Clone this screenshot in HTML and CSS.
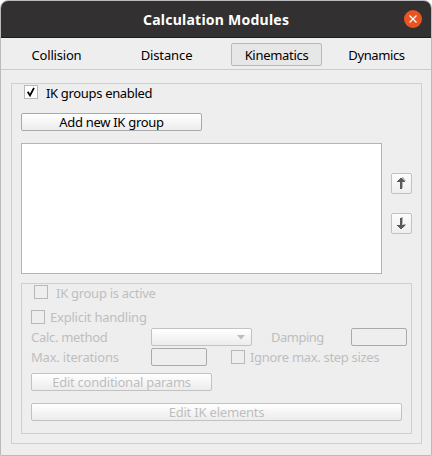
FILE: index.html
```html
<!DOCTYPE html>
<html lang="en">
<head>
<meta charset="utf-8">
<title>Calculation Modules</title>
<link rel="stylesheet" href="styles.css">
</head>
<body>
<main class="window">
  <header class="titlebar">
    <h1 class="title">Calculation Modules</h1>
    <button class="close" aria-label="Close"><svg width="18" height="18" viewBox="0 0 18 18"><path d="M5.5 5.5l7 7M12.5 5.5l-7 7" stroke="#fff" stroke-width="1.3" fill="none"/></svg></button>
  </header>
  <nav class="tabs">
    <button class="tab t-collision"><span>Collision</span></button>
    <button class="tab t-distance"><span>Distance</span></button>
    <button class="tab selected"><span>Kinematics</span></button>
    <button class="tab t-dynamics"><span>Dynamics</span></button>
  </nav>
  <section class="group outer">
    <label class="check enabled"><span class="box"><svg width="12" height="12" viewBox="0 0 12 12"><path d="M2.7 5.8L5 9.4L9 1.8" stroke="#000" stroke-width="1.8" fill="none"/></svg></span><span class="low">IK groups enabled</span></label>
    <button class="btn add">Add new IK group</button>
    <div class="list-row">
      <div class="list"></div>
      <div class="movers">
        <button class="mover" aria-label="Up"><svg width="19" height="19" viewBox="0 0 19 19"><path d="M10 3h1l3 4h-3v7h-1z" fill="#b5b5b5"/><path d="M8 4h2v1h1v1h1v1h1v1h-3v7H8V8H5V7h1V6h1V5h1z" fill="#5a5a5a"/></svg></button>
        <button class="mover" aria-label="Down"><svg width="19" height="19" viewBox="0 0 19 19"><path d="M9 3h2v7h3v1l-3 3z" fill="#b5b5b5"/><path d="M8 4h2v7h3v1h-1v1h-1v1h-1v1H8v-1H7v-1H6v-1H5v-1h3z" fill="#5a5a5a"/></svg></button>
      </div>
    </div>
    <section class="group inner">
      <label class="check active"><span class="box"></span><span class="low">IK group is active</span></label>
      <label class="check explicit"><span class="box"></span><span>Explicit handling</span></label>
      <div class="row">
        <span class="name">Calc. method</span>
        <div class="combo"><svg width="8" height="5" viewBox="0 0 8 5"><path d="M0 0h8L4 4.5z" fill="#bebebe"/></svg></div>
        <span class="damping">Damping</span>
        <div class="field"></div>
      </div>
      <div class="row second">
        <span class="name iterations">Max. iterations</span>
        <div class="field"></div>
        <label class="check ignore"><span class="box"></span><span>Ignore max. step sizes</span></label>
      </div>
      <button class="btn cond">Edit conditional params</button>
      <button class="btn elements">Edit IK elements</button>
    </section>
  </section>
</main>
</body>
</html>
```
FILE: styles.css
```css
* { box-sizing: border-box; }
html { background: #fff; }
body { margin: 0; font: 13px/18px "Noto Sans", "Open Sans", sans-serif; letter-spacing: -.3px; color: #000; white-space: nowrap; }
button { font: inherit; letter-spacing: inherit; color: inherit; padding: 0; margin: 0; }
svg { display: block; }
.window { width: 432px; height: 456px; border: 1px solid #bbb; border-radius: 8px 8px 0 0; background: #eee; overflow: hidden; }
.titlebar { height: 37px; background: #323031; border-bottom: 1px solid #1d1c1c; display: flex; align-items: center; padding: 0 9px 0 142px; }
.title { margin: 0; font-size: 14px; font-weight: 700; color: #fff; flex: 1; letter-spacing: .24px; padding-top: 1px; }
.close { width: 18px; height: 18px; border: 0; border-radius: 50%; background: #e95420; }
.tabs { height: 32px; border-bottom: 1px solid #cdcdcd; display: flex; padding: 5px 0 0 10px; gap: 19px; }
.tab { width: 91px; height: 23px; flex: none; border: 1px solid transparent; background: none; border-radius: 2px; }
.t-collision { letter-spacing: -.2px; }
.t-distance { letter-spacing: -.12px; }
.t-dynamics { width: 71px; letter-spacing: -.38px; }
.selected { background: #e7e7e7; border-color: #b9b9b9; }
.group { border: 1px solid #cfcfcf; }
.outer { margin: 13px 9px 0 10px; height: 361px; padding: 1px 9px 0; }
.check { display: flex; align-items: center; height: 14px; flex: none; }
.box { width: 14px; height: 14px; border: 1px solid #b8b8b8; flex: none; }
.low { padding-top: 2px; }
.enabled { padding-left: 3px; gap: 8px; letter-spacing: -.33px; }
.enabled .box { background: #fff; }
.btn { display: block; height: 18px; line-height: 16px; border: 1px solid #a9a9a9; border-radius: 2px; background: linear-gradient(#fff, #ececec); text-align: center; }
.add { width: 181px; margin-top: 14px; }
.list-row { display: flex; gap: 9px; margin-top: 12px; height: 131px; }
.list { width: 361px; flex: none; border: 1px solid #b4b4b4; background: #fff; }
.movers { padding-top: 30px; display: flex; flex-direction: column; gap: 19px; }
.mover { width: 21px; height: 21px; border: 1px solid #c2c2c2; border-radius: 2px; background: linear-gradient(#fcfcfc, #eee); }
.inner { margin-top: 9px; width: 391px; height: 151px; padding: 1px 0 0 9px; color: #bebebe; }
.active { padding-left: 3px; gap: 8px; letter-spacing: -.28px; }
.explicit { margin-top: 11px; gap: 5px; letter-spacing: -.23px; }
.row { display: flex; height: 18px; margin-top: 4px; }
.second { margin-top: 2px; }
.name { width: 120px; flex: none; }
.iterations { letter-spacing: -.2px; }
.combo { width: 101px; flex: none; border: 1px solid #c2c2c2; border-radius: 2px; background: linear-gradient(#fff, #ececec); display: flex; justify-content: flex-end; align-items: center; padding-right: 6px; }
.damping { width: 80px; flex: none; margin-left: 19px; letter-spacing: -.5px; }
.field { width: 56px; flex: none; border: 1px solid #aaa; border-radius: 2px; }
.ignore { margin: 2px 0 0 24px; gap: 5px; letter-spacing: -.32px; }
.inner .btn { border-color: #c2c2c2; }
.cond { width: 181px; margin-top: 7px; letter-spacing: -.24px; }
.elements { width: 371px; margin-top: 12px; letter-spacing: -.2px; }
```
